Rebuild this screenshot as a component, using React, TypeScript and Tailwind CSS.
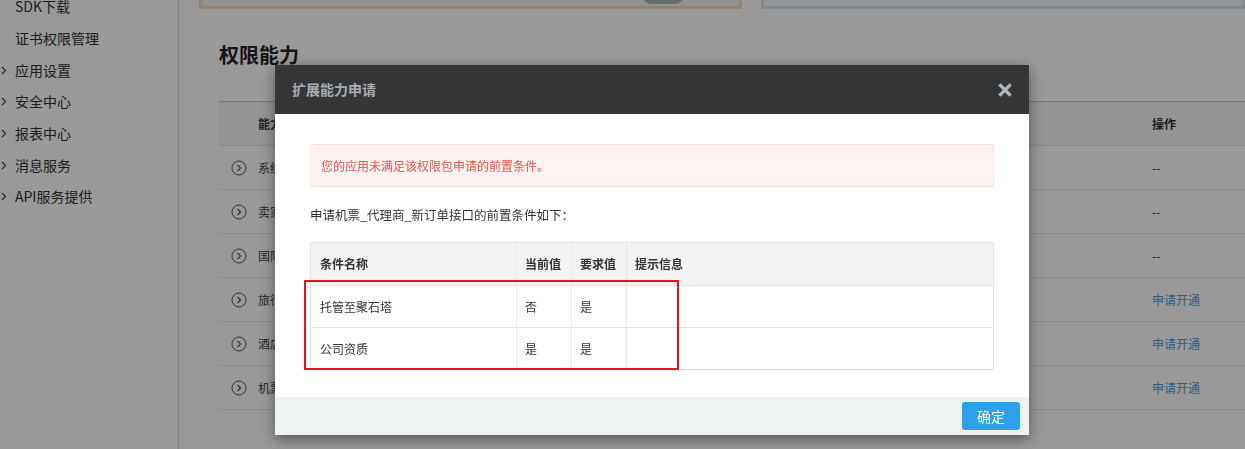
import React from "react";

const FONT = { fontFamily: '"Noto Sans CJK SC", "Microsoft YaHei", "Liberation Sans", sans-serif' };

const sideItems = [
  { label: "SDK下载", arrow: false },
  { label: "证书权限管理", arrow: false },
  { label: "应用设置", arrow: true },
  { label: "安全中心", arrow: true },
  { label: "报表中心", arrow: true },
  { label: "消息服务", arrow: true },
  { label: "API服务提供", arrow: true },
];

const abilities = [
  { name: "系统基础能力", op: "--" },
  { name: "卖家基础能力", op: "--" },
  { name: "国际机票能力", op: "--" },
  { name: "旅行商品能力", op: "申请开通" },
  { name: "酒店商品能力", op: "申请开通" },
  { name: "机票_代理商_新订单接口", op: "申请开通" },
];

const conditions = [
  { name: "托管至聚石塔", current: "否", required: "是", tip: "" },
  { name: "公司资质", current: "是", required: "是", tip: "" },
];

function CircleArrow() {
  return (
    <svg width="16" height="16" viewBox="0 0 16 16" fill="none" stroke="#555" strokeWidth="1">
      <circle cx="8" cy="8" r="7" />
      <path d="M6.5 4.8 L9.5 8 L6.5 11.2" strokeWidth="1.2" />
    </svg>
  );
}

function SideArrow() {
  return (
    <svg width="6" height="9" viewBox="0 0 6 9" fill="none" stroke="#444" strokeWidth="1.2">
      <path d="M1 1 L4.5 4.5 L1 8" />
    </svg>
  );
}

export default function App() {
  return (
    <div className="relative h-[449px] w-[1245px] overflow-hidden bg-white text-[#333]" style={FONT}>
      <div className="flex h-full">
        {/* sidebar */}
        <div className="h-full w-[179px] shrink-0 border-r border-[#d9d9d9]">
          <ul className="-mt-[9px]">
            {sideItems.map((it) => (
              <li key={it.label} className="flex h-[31.7px] items-center text-[14px] text-[#333]">
                <span className="flex w-[15px] items-center pl-[1px]">{it.arrow && <SideArrow />}</span>
                <span>{it.label}</span>
              </li>
            ))}
          </ul>
        </div>

        {/* main */}
        <div className="min-w-0 flex-1 pl-[20px]">
          <div className="flex h-[9px] gap-[19px]">
            <div className="relative h-[9px] w-[543px] border-x-[3px] border-b-[3px] border-[#f3d9bd] bg-[#f4f2f0]">
              <div className="absolute -top-[14px] left-[440px] h-[18px] w-[42px] rounded-full bg-[#a9b9bc]" />
            </div>
            <div className="h-[9px] flex-1 border-x-[3px] border-b-[3px] border-[#d6e6f3] bg-[#f7f9fb]" />
          </div>

          <h2 className="mt-[32px] h-[28px] pl-[20px] text-[20px] font-bold leading-[28px] text-[#222]">权限能力</h2>

          <div className="ml-[20px] mt-[32px] border-t border-[#c8c8c8]">
            <div className="flex h-[43px] items-center bg-[#f7f7f7] text-[12px] font-bold text-[#333]">
              <span className="flex-1 pl-[39px]">能力名称</span>
              <span className="w-[93px]">操作</span>
            </div>
            {abilities.map((a) => (
              <div key={a.name} className="flex h-[44px] items-center border-t border-[#e6e6e6] text-[12px]">
                <span className="flex w-[39px] justify-center pl-[1px]">
                  <CircleArrow />
                </span>
                <span className="flex-1 text-[#444]">{a.name}</span>
                <span className={`w-[93px] ${a.op === "--" ? "text-[#333]" : "text-[#4a9fe2]"}`}>{a.op}</span>
              </div>
            ))}
            <div className="border-t border-[#e6e6e6]" />
          </div>
        </div>
      </div>

      {/* overlay */}
      <div className="fixed inset-0 bg-black/40">
        <div className="absolute left-[275px] top-[65px] w-[754px] bg-white shadow-[0_4px_14px_rgba(0,0,0,0.45)]">
          <div className="flex h-[49px] items-center justify-between bg-[#353638] pl-[17px] pr-[17px]">
            <span className="text-[14px] font-bold text-[#a9adb0]">扩展能力申请</span>
            <svg width="14" height="14" viewBox="0 0 14 14" stroke="#b2b7bb" strokeWidth="3.2" strokeLinecap="square">
              <path d="M2.5 2.5 L11.5 11.5 M11.5 2.5 L2.5 11.5" />
            </svg>
          </div>

          <div className="px-[35px] pb-[27px] pt-[30px]">
            <div className="flex h-[43px] items-center border border-[#fbe3e3] bg-[#fef2f2] pl-[10px] text-[12px] text-[#e5534b]">
              您的应用未满足该权限包申请的前置条件。
            </div>

            <p className="mt-[19px] text-[12.5px] leading-[18px] text-[#333]">申请机票_代理商_新订单接口的前置条件如下：</p>

            <div className="relative mt-[18px]">
              <table className="w-full border-collapse border border-[#e3e3e3] text-[12px]">
                <thead>
                  <tr className="h-[43px] bg-[#f3f3f3] text-left font-bold text-[#333]">
                    <th className="w-[206px] border-r border-[#e6e6e6] pl-[9px] font-bold">条件名称</th>
                    <th className="w-[55px] border-r border-[#e6e6e6] pl-[8px] font-bold">当前值</th>
                    <th className="w-[55px] border-r border-[#e6e6e6] pl-[8px] font-bold">要求值</th>
                    <th className="pl-[8px] font-bold">提示信息</th>
                  </tr>
                </thead>
                <tbody>
                  {conditions.map((c) => (
                    <tr key={c.name} className="h-[42px] border-t border-[#e3e3e3] text-[#333]">
                      <td className="border-r border-[#e6e6e6] pl-[9px]">{c.name}</td>
                      <td className="border-r border-[#e6e6e6] pl-[8px]">{c.current}</td>
                      <td className="border-r border-[#e6e6e6] pl-[8px]">{c.required}</td>
                      <td className="pl-[8px]">{c.tip}</td>
                    </tr>
                  ))}
                </tbody>
              </table>
              {/* highlight box */}
              <div className="pointer-events-none absolute -left-[6px] top-[38px] h-[90px] w-[375px] border-2 border-[#e8141c]" />
            </div>
          </div>

          <div className="flex h-[38px] items-center justify-end bg-[#eff2f3] pr-[9px]">
            <button className="h-[28px] w-[58px] rounded-[3px] bg-[#2ba0eb] text-[14px] text-white">确定</button>
          </div>
        </div>
      </div>
    </div>
  );
}
